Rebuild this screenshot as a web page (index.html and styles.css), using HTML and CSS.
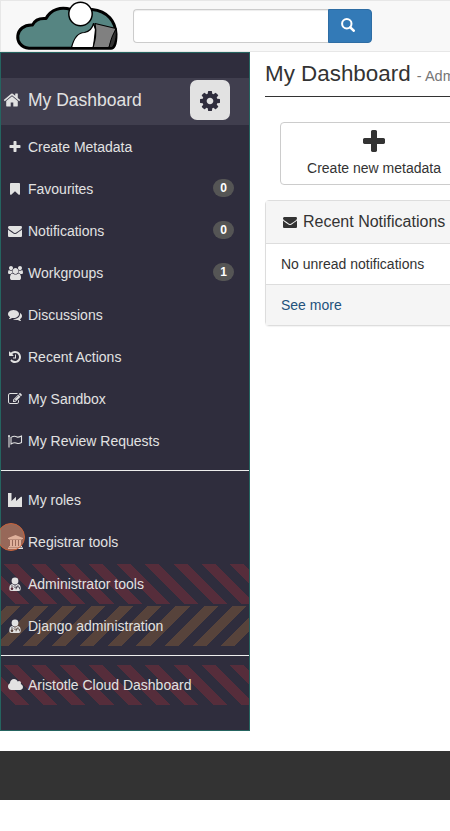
FILE: index.html
```html
<!DOCTYPE html>
<html lang="en">
<head>
<meta charset="utf-8">
<title>My Dashboard</title>
<link rel="stylesheet" href="styles.css">
</head>
<body>
<svg class="defs" aria-hidden="true">
<symbol id="plus" viewBox="0 0 1792 1792"><path d="M1600 736v192q0 40-28 68t-68 28h-416v416q0 40-28 68t-68 28h-192q-40 0-68-28t-28-68v-416h-416q-40 0-68-28t-28-68v-192q0-40 28-68t68-28h416v-416q0-40 28-68t68-28h192q40 0 68 28t28 68v416h416q40 0 68 28t28 68z"/></symbol>
<symbol id="bookmark" viewBox="0 0 1792 1792"><path d="M1420 128q23 0 44 9 33 13 52.5 41t19.5 62v1289q0 34-19.5 62t-52.5 41q-19 8-44 8-48 0-83-32l-441-424-441 424q-36 33-83 33-23 0-44-9-33-13-52.5-41t-19.5-62v-1289q0-34 19.5-62t52.5-41q21-9 44-9h1048z"/></symbol>
<symbol id="envelope" viewBox="0 0 1792 1792"><path d="M1792 710v794q0 66-47 113t-113 47h-1472q-66 0-113-47t-47-113v-794q44 49 101 87 362 246 497 345 57 42 92.5 65.5t94.5 48 110 24.5h2q51 0 110-24.5t94.5-48 92.5-65.5q170-123 498-345 57-39 100-87zm0-294q0 79-49 151t-122 123q-376 261-468 325-10 7-42.5 31t-54 38.5-52 32.5-57.5 27-50 9h-2q-23 0-50-9t-57.5-27-52-32.5-54-38.5-42.5-31q-91-64-262-182.5t-205-142.5q-62-42-117-115.5t-55-136.5q0-78 41.5-130t118.5-52h1472q65 0 112.5 47t47.5 113z"/></symbol>
<symbol id="users" viewBox="-64 0 1920 1792"><path d="M529 896q-162 5-265 128h-134q-82 0-138-40.5t-56-118.5q0-353 124-353 6 0 43.5 21t97.5 42.5 119 21.5q67 0 133-23-5 37-5 66 0 139 81 256zm1071 637q0 120-73 189.5t-194 69.5h-874q-121 0-194-69.5t-73-189.5q0-53 3.5-103.5t14-109 26.5-108.5 43-97.5 62-81 85.5-53.5 111.5-20q10 0 43 21.5t73 48 107 48 135 21.5 135-21.5 107-48 73-48 43-21.5q61 0 111.5 20t85.5 53.5 62 81 43 97.5 26.5 108.5 14 109 3.5 103.5zm-1024-1277q0 106-75 181t-181 75-181-75-75-181 75-181 181-75 181 75 75 181zm704 384q0 159-112.5 271.5t-271.5 112.5-271.5-112.5-112.5-271.5 112.5-271.5 271.5-112.5 271.5 112.5 112.5 271.5zm576 225q0 78-56 118.5t-138 40.5h-134q-103-123-265-128 81-117 81-256 0-29-5-66 66 23 133 23 59 0 119-21.5t97.5-42.5 43.5-21q124 0 124 353zm-128-609q0 106-75 181t-181 75-181-75-75-181 75-181 181-75 181 75 75 181z"/></symbol>
<symbol id="comments" viewBox="0 0 1792 1792"><path d="M1408 768q0 139-94 257t-256.5 186.5-353.5 68.5q-86 0-176-16-124 88-278 128-36 9-86 16h-3q-11 0-20.5-8t-11.5-21q-1-3-1-6.5t.5-6.5 2-6l2.5-5 3.5-5.5 4-5 4.5-5 4-4.5q5-6 23-25t26-29.5 22.5-29 25-38.5 20.5-44q-124-72-195-177t-71-224q0-139 94-257t256.5-186.5 353.5-68.5 353.5 68.5 256.5 186.5 94 257zm384 256q0 120-71 224.5t-195 176.5q10 24 20.5 44t25 38.5 22.5 29 26 29.5 23 25q1 1 4 4.5t4.5 5 4 5 3.5 5.5l2.5 5 2 6 .5 6.5-1 6.5q-3 14-13 22t-22 7q-50-7-86-16-154-40-278-128-90 16-176 16-271 0-472-132 58 4 88 4 161 0 309-45t264-129q125-92 192-212t67-254q0-77-23-152 129 71 204 178t75 230z"/></symbol>
<symbol id="history" viewBox="0 0 1792 1792"><path d="M1664 896q0 156-61 298t-164 245-245 164-298 61q-172 0-327-72.5t-264-204.5q-7-10-6.5-22.5t8.5-20.5l137-138q10-9 25-9 16 2 23 12 73 95 179 147t225 52q104 0 198.5-40.5t163.5-109.5 109.5-163.5 40.5-198.5-40.5-198.5-109.5-163.5-163.5-109.5-198.5-40.5q-98 0-188 35.5t-160 101.5l137 138q31 30 14 69-17 40-59 40h-448q-26 0-45-19t-19-45v-448q0-42 40-59 39-17 69 14l130 129q107-101 244.5-156.5t284.5-55.5q156 0 298 61t245 164 164 245 61 298zm-640-288v448q0 14-9 23t-23 9h-320q-14 0-23-9t-9-23v-64q0-14 9-23t23-9h224v-352q0-14 9-23t23-9h64q14 0 23 9t9 23z"/></symbol>
<symbol id="edit" viewBox="0 0 1792 1792"><path d="M888 1184l116-116-152-152-116 116v56h96v96h56zm440-720q-16-16-33 1l-350 350q-17 17-1 33t33-1l350-350q17-17 1-33zm80 594v190q0 119-84.5 203.5t-203.5 84.5h-832q-119 0-203.5-84.5t-84.5-203.5v-832q0-119 84.5-203.5t203.5-84.5h832q63 0 117 25 15 7 18 23 3 17-9 29l-49 49q-14 14-32 8-23-6-45-6h-832q-66 0-113 47t-47 113v832q0 66 47 113t113 47h832q66 0 113-47t47-113v-126q0-13 9-22l64-64q15-15 35-7t20 29zm-96-738l288 288-672 672h-288v-288zm444 132l-92 92-288-288 92-92q28-28 68-28t68 28l152 152q28 28 28 68t-28 68z"/></symbol>
<symbol id="flag" viewBox="0 0 14 14"><path d="M1 2v11.5M3 3.400C6.300 1.400 7 2 9 2.900c1.500.7 3-.2 4.500-.9v6.500C12 9.400 10.500 10 9 9.200 7.300 8.300 6 8.200 3 9.900z" fill="none" stroke="currentColor" stroke-width="1.100"/><circle cx="1" cy="2" r="1"/></symbol>
<symbol id="industry" viewBox="0 0 14 14"><path d="M0 0h3.500v8l4.500-4.200V8l5-4.200a.6.6 0 0 1 1 .4V14H0z"/></symbol>
<symbol id="bank" viewBox="0 0 15 14"><path d="M7.500 0 15 3v1h-1v.6H1V4H0V3zM2 5h2v6h1V5h2v6h1V5h2v6h1V5h2v6h1v1H1v-1h1zM0 12.500h15V14H0z"/></symbol>
<symbol id="doctor" viewBox="0 0 14 14"><circle cx="7" cy="4" r="3.400"/><path fill-rule="evenodd" d="M4.200 7 7 8.800 9.800 7c2.200.4 2.900 2.300 2.900 4.800 0 1.400-.8 2.200-2.100 2.200H3.400c-1.300 0-2.100-.8-2.100-2.200 0-2.500.7-4.400 2.900-4.800zM3.600 8v2.400a1.300 1.300 0 1 0 .8 0V8.300L7 11l2.500-2.600v1c-1.300.2-1.900 1.100-1.900 2.900h.9c0-1.400.5-2 1.400-2s1.400.6 1.400 2h.8c0-1.800-.5-2.700-1.800-2.900V8L7 9.900z"/></symbol>
<symbol id="cloud" viewBox="0 0 1920 1792"><path d="M1920 1152q0 159-112.500 271.500t-271.500 112.500h-1088q-185 0-316.500-131.500t-131.500-316.500q0-132 71-241.500t187-163.500q-2-28-2-43 0-212 150-362t362-150q158 0 286.500 88t187.500 230q70-62 166-62 106 0 181 75t75 181q0 75-41 138 129 30 213 134.500t84 239.500z"/></symbol>
<symbol id="home" viewBox="0 0 1792 1792"><path d="M1472 992v480q0 26-19 45t-45 19h-384v-384h-256v384h-384q-26 0-45-19t-19-45v-480q0-1 .5-3t.5-3l575-474 575 474q1 2 1 6zm223-69l-62 74q-8 9-21 11h-3q-13 0-21-7l-692-577-692 577q-12 8-24 7-13-2-21-11l-62-74q-8-10-7-23.500t11-21.500l719-599q32-26 76-26t76 26l244 204v-195q0-14 9-23t23-9h192q14 0 23 9t9 23v408l219 182q10 8 11 21.500t-7 23.500z"/></symbol>
<symbol id="cog" viewBox="128 128 1536 1536"><path d="M1152 896q0-106-75-181t-181-75-181 75-75 181 75 181 181 75 181-75 75-181zm512-109v222q0 12-8 23t-20 13l-185 28q-19 54-39 91 35 50 107 138 10 12 10 25t-9 23q-27 37-99 108t-94 71q-12 0-26-9l-138-108q-44 23-91 38-16 136-29 186-7 28-36 28h-222q-14 0-24.500-8.500t-11.500-21.500l-28-184q-49-16-90-37l-141 107q-10 9-25 9-14 0-25-11-126-114-165-168-7-10-7-23 0-12 8-23 15-21 51-66.500t54-70.500q-27-50-41-99l-183-27q-13-2-21-12.500t-8-23.500v-222q0-12 8-23t19-13l186-28q14-46 39-92-40-57-107-138-10-12-10-24 0-10 9-23 26-36 98.500-107.500t94.500-71.500q13 0 26 10l138 107q44-23 91-38 16-136 29-186 7-28 36-28h222q14 0 24.500 8.500t11.500 21.500l28 184q49 16 90 37l142-107q9-9 24-9 13 0 25 10 129 119 165 170 7 8 7 22 0 12-8 23-15 21-51 66.500t-54 70.500q26 50 41 98l183 28q13 2 21 12.500t8 23.500z"/></symbol>
</svg>
<header class="navbar">
  <a class="logo" href="#" aria-label="Home"><svg width="104" height="51" viewBox="15 0 104 51" stroke="#000" stroke-linejoin="round">
    <path fill="#568582" stroke-width="3" d="M29 48.300C12.500 46.500 14.500 24 32.500 25 35 19.500 40 18 46 18.500 51 9 61 6.500 71 9.500h21l0 0C108 11 115.500 22 116 34c0 7-1 14.300-5 14.300z"/>
    <path fill="#fff" stroke-width="1.200" d="M71.500 47.500c3-12 8-15 13-15 5-1 8-5 9-9l2 6-2 18z"/>
    <path fill="#808080" stroke-width="1.200" d="M95 23.500 116 28.500l-7 19H93c2-7 4-14 2-24z"/>
    <path fill="#333" stroke-width="1" d="M116 29.500c1 7-1 15-4 18h-3c2-8 3-12 7-18z"/>
    <circle cx="80.500" cy="14" r="11.700" fill="#fff" stroke-width="1.500"/>
  </svg></a>
  <form class="search">
    <input class="search-input" type="text" aria-label="Search">
    <button class="search-btn" type="button" aria-label="Search"><svg width="14" height="14" viewBox="0 0 14 14"><g fill="none" stroke="#fff"><circle cx="5.800" cy="5.800" r="4.700" stroke-width="2"/><path d="m9.300 9.300 3.400 3.400" stroke-width="2.600" stroke-linecap="round"/></g></svg></button>
  </form>
</header>
<div class="layout">
  <nav class="sidebar">
    <div class="side-head"><svg class="home"><use href="#home"/></svg><span class="side-title">My Dashboard</span><button class="cog" aria-label="Settings"><svg width="20" height="20"><use href="#cog"/></svg></button></div>
    <a class="item"><svg class="ico"><use href="#plus"/></svg>Create Metadata</a>
    <a class="item"><svg class="ico"><use href="#bookmark"/></svg>Favourites<span class="badge">0</span></a>
    <a class="item"><svg class="ico"><use href="#envelope"/></svg>Notifications<span class="badge">0</span></a>
    <a class="item"><svg class="ico wide"><use href="#users"/></svg>Workgroups<span class="badge">1</span></a>
    <a class="item"><svg class="ico"><use href="#comments"/></svg>Discussions</a>
    <a class="item"><svg class="ico"><use href="#history"/></svg>Recent Actions</a>
    <a class="item"><svg class="ico"><use href="#edit"/></svg>My Sandbox</a>
    <a class="item"><svg class="ico"><use href="#flag"/></svg>My Review Requests</a>
    <hr class="rule">
    <a class="item"><svg class="ico"><use href="#industry"/></svg>My roles</a>
    <a class="item marked"><svg class="ico wide"><use href="#bank"/></svg>Registrar tools<span class="marker"></span></a>
    <a class="item red"><svg class="ico"><use href="#doctor"/></svg>Administrator tools</a>
    <a class="item brown"><svg class="ico"><use href="#doctor"/></svg>Django administration</a>
    <hr class="rule">
    <a class="item red"><svg class="ico wide"><use href="#cloud"/></svg>Aristotle Cloud Dashboard</a>
  </nav>
  <main class="main">
    <h1 class="title">My Dashboard <small class="sub">- Administrator</small></h1>
    <button class="create"><svg class="big-plus"><use href="#plus"/></svg>Create new metadata</button>
    <section class="panel">
      <h2 class="panel-head"><svg class="ico"><use href="#envelope"/></svg>Recent Notifications</h2>
      <div class="panel-body">No unread notifications</div>
      <div class="panel-foot"><a class="more" href="#">See more</a></div>
    </section>
  </main>
</div>
<footer class="footer"></footer>
</body>
</html>
```
FILE: styles.css
```css
* { box-sizing: border-box; }
html { overflow: hidden; }
body {
  margin: 0;
  background: #fff;
  color: #333;
  font: 14px/20px "Liberation Sans", Arial, sans-serif;
  overflow: hidden;
}
svg { fill: currentColor; flex: none; }
button { font: inherit; color: inherit; }
.defs { display: none; }

.navbar {
  height: 52px;
  display: flex;
  background: #f8f8f8;
  border: 1px solid #e7e7e7;
  border-right: 0;
}
.logo { display: block; margin: -1px 14px 0; height: 51px; }
.logo svg { display: block; }
.search { display: flex; margin: 8px 0 0; height: 34px; }
.search-input {
  width: 195px;
  border: 1px solid #ccc;
  border-right: 0;
  border-radius: 4px 0 0 4px;
  background: #fff;
  box-shadow: inset 0 1px 1px rgba(0, 0, 0, .075);
}
.search-btn {
  display: flex;
  align-items: center;
  justify-content: center;
  width: 44px;
  padding: 0 4px 2px 0;
  border: 1px solid #2e6da4;
  border-radius: 0 4px 4px 0;
  background: #337ab7;
}

.layout { display: flex; align-items: flex-start; height: 699px; }
.sidebar {
  width: 250px;
  height: 679px;
  flex: none;
  padding-top: 25px;
  border: 1px solid #256460;
  background: #2f2d3d;
  color: #e2e2e2;
}
.side-head {
  display: flex;
  height: 47px;
  margin-bottom: 2px;
  padding: 0 19px 3px 2px;
  align-items: center;
  background: #403e4e;
  font-size: 17.5px;
}
.home { width: 18px; height: 18px; margin-right: 7px; }
.cog {
  display: flex;
  align-items: center;
  justify-content: center;
  width: 40px;
  height: 40px;
  margin-left: auto;
  padding: 2px 0 0;
  border: 0;
  border-radius: 7px;
  background: #e2e2e2;
  color: #2f2d3d;
}
.item {
  display: flex;
  align-items: center;
  height: 40px;
  margin-bottom: 2px;
  padding: 0 15px 0 5px;
}
.ico { width: 18px; height: 14px; margin-right: 4px; }
.ico.wide { width: 19px; margin-right: 3px; }
.badge {
  width: 21px;
  height: 18px;
  margin: -2px 0 0 auto;
  border-radius: 10px;
  background: #555;
  color: #fff;
  font-size: 12px;
  font-weight: bold;
  line-height: 18px;
  text-align: center;
}
.rule { height: 1px; margin: 9px 0; border: 0; background: #eee; }
.red { background: repeating-linear-gradient(45deg, transparent 0 10px, #562d3b 10px 20px); }
.brown { background: repeating-linear-gradient(-45deg, transparent 0 10px, #57433b 10px 20px); }
.marked { position: relative; }
.marker {
  position: absolute;
  left: -4px;
  top: 1px;
  width: 28px;
  height: 28px;
  border: 1px solid #c9623a;
  border-radius: 50%;
  background: rgba(222, 143, 108, .6);
}

.main {
  flex: 1;
  min-width: 0;
  height: 679px;
  padding-left: 15px;
  overflow: hidden;
}
.title {
  width: 400px;
  height: 45px;
  margin: 0 0 25px;
  border-bottom: 1px solid #333;
  font-size: 22.4px;
  line-height: 43px;
  font-weight: normal;
  white-space: nowrap;
}
.sub { color: #777; font-size: 14.56px; }
.create {
  display: flex;
  flex-direction: column;
  align-items: center;
  width: 188px;
  height: 63px;
  margin: 0 0 15px 15px;
  padding: 5px 0;
  border: 1px solid #ccc;
  border-radius: 4px;
  background: #fff;
}
.big-plus { width: 28px; height: 28px; margin-bottom: 2px; }
.panel {
  width: 400px;
  border: 1px solid #ddd;
  border-radius: 4px;
  box-shadow: 0 1px 1px rgba(0, 0, 0, .05);
}
.panel-head {
  display: flex;
  align-items: center;
  height: 43px;
  margin: 0;
  padding: 0 15px;
  border-bottom: 1px solid #ddd;
  background: #f5f5f5;
  font-size: 16px;
  font-weight: normal;
}
.panel-body { height: 40px; padding: 10px 15px; }
.panel-foot { height: 41px; padding: 10px 15px; border-top: 1px solid #ddd; background: #f5f5f5; }
.more { color: #23527c; text-decoration: none; }
.footer { height: 49px; background: #333; }
```
